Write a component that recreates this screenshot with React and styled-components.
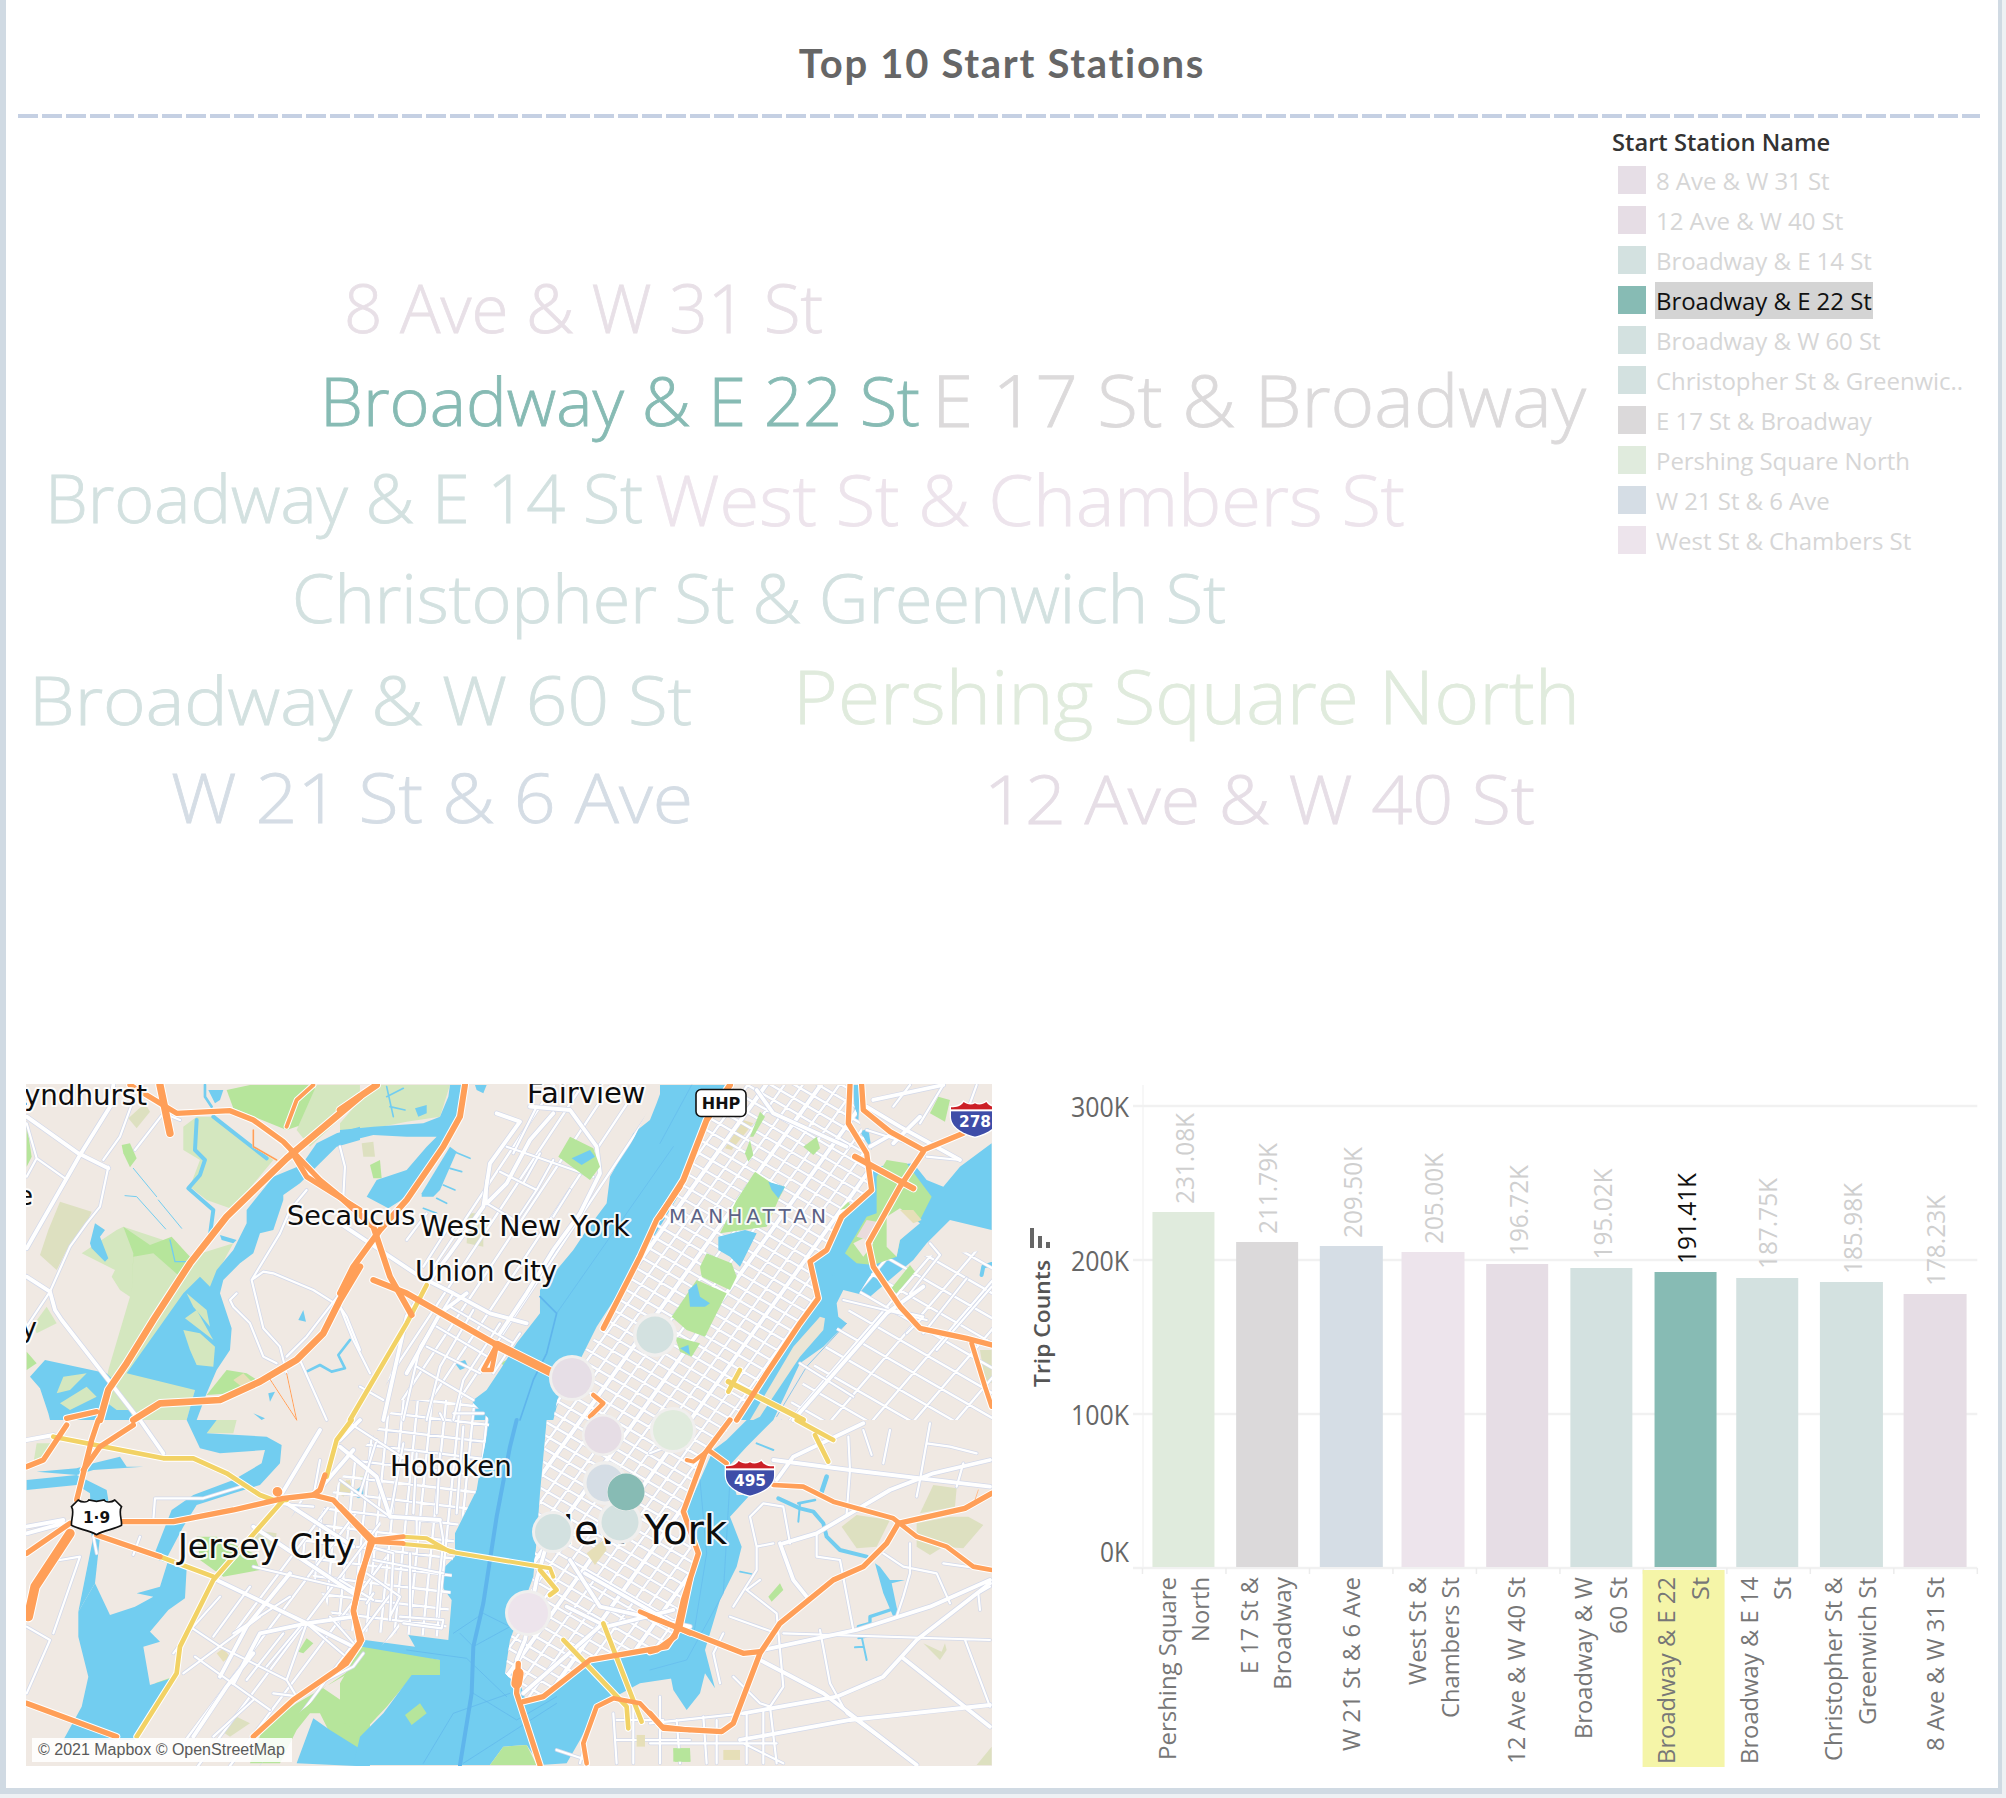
import React from "react";
import styled, { createGlobalStyle } from "styled-components";

const Global = createGlobalStyle`
  html, body { margin: 0; padding: 0; background: #eef1f4; }
  #root { width: 2006px; height: 1798px; }
`;

const SANS = `"Open Sans", "Noto Sans", sans-serif`;

const Frame = styled.div`
  box-sizing: border-box;
  width: 2002px;
  height: 1794px;
  display: flex;
  flex-direction: column;
  background: #fff;
  border-left: 6px solid #d0dae3;
  border-right: 4px solid #d0dae3;
  border-bottom: 6px solid #d0dae3;
  padding: 0 18px 0 12px;
  font-family: ${SANS};
`;
const Title = styled.h1`
  margin: 0;
  height: 114px;
  box-sizing: border-box;
  padding: 39px 0 0 6px;
  text-align: center;
  font: 700 40px/48px Lato, ${SANS};
  letter-spacing: 1.7px;
  color: #666;
`;
const DashRule = styled.div`
  height: 4px;
  flex: none;
  background: repeating-linear-gradient(90deg, #c5d0e3 0 20px, transparent 20px 24px);
`;
const TopRow = styled.section`
  flex: none;
  height: 966px;
  display: flex;
`;
const Cloud = styled.svg`
  flex: none;
  display: block;
  width: 1595px;
  height: 966px;
`;
const CloudWord = styled.text`
  font-family: ${SANS};
  font-weight: 300;
  font-size: ${p => p.$size}px;
  fill: ${p => p.$color};
  stroke: ${p => p.$color};
  stroke-width: 0.8px;
`;
const Legend = styled.aside`
  flex: 1;
  padding-top: 9px;
  display: flex;
  flex-direction: column;
`;
const LegendTitle = styled.div`
  height: 30px;
  font: 600 23.7px/30px ${SANS};
  color: #333;
  margin-bottom: 9px;
  margin-left: -1px;
`;
const LegendRow = styled.div`
  height: 40px;
  display: flex;
  align-items: flex-start;
  padding-left: 5px;
  gap: 10px;
`;
const Swatch = styled.span`
  flex: none;
  width: 28px;
  height: 28px;
  background: ${p => p.$color};
`;
const LegendLabel = styled.span`
  display: block;
  box-sizing: border-box;
  height: 37px;
  margin-top: -4px;
  margin-left: -1px;
  padding: 0 1px;
  white-space: nowrap;
  font: 400 24px/37px ${SANS};
  letter-spacing: -0.05px;
  color: ${p => (p.$active ? "#111" : "#d6d6d6")};
  background: ${p => (p.$active ? "#d4d4d4" : "transparent")};
`;
const BottomRow = styled.section`
  flex: none;
  display: flex;
  gap: 18px;
  padding-left: 8px;
`;
const MapBox = styled.div`
  position: relative;
  flex: none;
  width: 966px;
  height: 682px;
  overflow: hidden;
`;
const MapSvg = styled.svg`
  display: block;
  width: 966px;
  height: 682px;
`;
const Attribution = styled.div`
  position: absolute;
  left: 6px;
  bottom: 4px;
  width: 260px;
  height: 24px;
  box-sizing: border-box;
  background: rgba(255,255,255,.88);
  padding-left: 6px;
  font: 400 16px/24px "Liberation Sans", Arial, sans-serif;
  color: #5a5a5a;
  white-space: nowrap;
`;
const ChartSvg = styled.svg`
  display: block;
  flex: none;
  width: 980px;
  height: 686px;
`;
const Area = styled.path`
  fill: ${p => p.$fill};
`;
const Line = styled.path`
  fill: none;
  stroke: ${p => p.$color};
  stroke-width: ${p => p.$w};
  stroke-linecap: round;
  stroke-linejoin: round;
`;
const MapLabel = styled.text`
  font-family: "DejaVu Sans", sans-serif;
  font-size: ${p => p.$size}px;
  fill: #0d0d0d;
  stroke: rgba(255,255,255,.9);
  stroke-width: 4px;
  paint-order: stroke;
  stroke-linejoin: round;
`;
const ShieldText = styled.text`
  font-family: "DejaVu Sans", sans-serif;
  font-weight: 700;
  font-size: ${p => p.$size}px;
  fill: ${p => p.$color};
  text-anchor: middle;
`;
const AxisText = styled.text`
  font-family: ${SANS};
  font-size: 27px;
  fill: #666;
  text-anchor: end;
`;
const ValueText = styled.text`
  font-family: ${SANS};
  font-size: 25px;
  fill: ${p => (p.$active ? "#111" : "#cfcfcf")};
`;
const CategoryText = styled.text`
  font-family: ${SANS};
  font-size: 23px;
  fill: #777;
  text-anchor: end;
`;
const AxisTitle = styled.text`
  font-family: ${SANS};
  font-weight: 600;
  font-size: 21px;
  fill: #555;
  text-anchor: end;
`;

const WORDS = [
  ["8 Ave & W 31 St", 344, 823, 333, 67, "#e8e0e7"],
  ["Broadway & E 22 St", 320, 920, 426, 66, "#87bbb4"],
  ["E 17 St & Broadway", 932, 1586, 427, 71, "#dcdadb"],
  ["Broadway & E 14 St", 45, 643, 523, 66, "#d3e1e0"],
  ["West St & Chambers St", 655, 1405, 526, 70, "#ede4ec"],
  ["Christopher St & Greenwich St", 292, 1226, 623, 67, "#d3e1e0"],
  ["Broadway & W 60 St", 29, 692, 725, 67, "#d3e1e0"],
  ["Pershing Square North", 793, 1580, 724, 73, "#e0ebdd"],
  ["W 21 St & 6 Ave", 171, 693, 823, 68, "#d5dde5"],
  ["12 Ave & W 40 St", 984, 1535, 824, 67, "#e6dee6"],
];

const LEGEND = [
  ["8 Ave & W 31 St", "#e6dee6"],
  ["12 Ave & W 40 St", "#e6dde5"],
  ["Broadway & E 14 St", "#d3e1e0"],
  ["Broadway & E 22 St", "#87bbb4", true],
  ["Broadway & W 60 St", "#d3e1e0"],
  ["Christopher St & Greenwic..", "#d3e1e0"],
  ["E 17 St & Broadway", "#dbd9da"],
  ["Pershing Square North", "#e0ebdd"],
  ["W 21 St & 6 Ave", "#d5dde5"],
  ["West St & Chambers St", "#ede4ec"],
];

const fx = x => 1010 + (x - 1010) * 0.9962;

const BARS = [
  { v: "231.08K", x: 1153, w: 62, top: 1212, c: "#e0ebdd", vx: 1195, vy: 1204, lines: [["Pershing Square", 1177, 183], ["North", 1210, 65]] },
  { v: "211.79K", x: 1237, w: 62, top: 1242, c: "#dbd9da", vx: 1278.5, vy: 1234, lines: [["E 17 St &", 1259, 97], ["Broadway", 1292, 113]] },
  { v: "209.50K", x: 1321, w: 63, top: 1246, c: "#d5dde5", vx: 1363, vy: 1238, lines: [["W 21 St & 6 Ave", 1361, 174]] },
  { v: "205.00K", x: 1403, w: 63, top: 1252, c: "#ede4ec", vx: 1445, vy: 1244, lines: [["West St &", 1428, 108], ["Chambers St", 1461, 141]] },
  { v: "196.72K", x: 1488, w: 62, top: 1264, c: "#e6dde5", vx: 1530, vy: 1256, lines: [["12 Ave & W 40 St", 1527, 187]] },
  { v: "195.02K", x: 1572.5, w: 62, top: 1268, c: "#d3e1e0", vx: 1614, vy: 1259.5, lines: [["Broadway & W", 1594, 162], ["60 St", 1629, 57]] },
  { v: "191.41K", x: 1657, w: 62, top: 1272, c: "#87bbb4", vx: 1699, vy: 1264, active: true, lines: [["Broadway & E 22", 1678, 187], ["St", 1711.5, 23]] },
  { v: "187.75K", x: 1739, w: 62, top: 1278, c: "#d3e1e0", vx: 1780, vy: 1269, lines: [["Broadway & E 14", 1761, 187], ["St", 1794, 23]] },
  { v: "185.98K", x: 1823, w: 63, top: 1282, c: "#d3e1e0", vx: 1865, vy: 1274, lines: [["Christopher St &", 1845, 184], ["Greenwich St", 1879, 148]] },
  { v: "178.23K", x: 1907, w: 63, top: 1294, c: "#e6dde5", vx: 1949, vy: 1286, lines: [["8 Ave & W 31 St", 1947.5, 174]] },
];

const C = {
  water: "#72cdf0", land: "#f0e9e3", pale: "#d4e7bf", bright: "#b6e59b", olive: "#dde0c0", tan: "#e6dfb8",
  orange: "#ff9f58", yellow: "#f2d265", ship: "#5fb5ec", pink: "#eadbdc",
};

/* traced per crop of the reference; coordinates at 3 units per pixel */
const TILES = [
  { o: [20, 1080],
    under: [
      [C.pale, "M490 140 L530 110 L580 110 L760 240 L660 360 L630 385 L560 360 L510 320 L540 240 L490 210 Z"],
      [C.pale, "M185 520 L290 450 L310 440 L430 480 L510 530 L640 490 L580 600 L560 700 L590 780 L580 860 L525 930 L500 1020 L240 1020 L265 870 L330 650 L300 630 L275 590 L285 570 Z"],
      [C.bright, "M310 440 L390 495 L455 470 L510 530 L480 590 L400 520 L340 530 L335 650 L340 520 Z"],
      [C.bright, "M620 30 L690 15 L880 15 L900 60 L860 130 L800 150 L640 85 Z"],
      [C.pale, "M890 15 L1020 15 L1020 60 L870 200 L830 150 Z"],
      [C.bright, "M305 195 L330 190 L350 235 L330 262 L310 220 Z"],
      [C.olive, "M120 365 L215 395 L200 430 L140 510 L110 570 L60 525 L85 450 Z"],
      [C.olive, "M325 115 L375 70 L390 95 L350 145 Z"],
      [C.bright, "M20 130 L35 230 L20 260 Z"],
      [C.bright, "M20 815 L50 850 L20 870 Z"],
      [C.pale, "M40 735 L80 680 L110 730 L50 760 Z"],
      [C.bright, "M560 945 L620 870 L680 880 L720 905 L700 920 L640 940 Z"],
      [C.tan, "M640 900 L670 880 L695 905 L670 925 Z"],
    ],
    water: [
      "M1020 140 L950 160 L890 190 L845 255 L760 290 L680 390 L680 430 L640 510 L590 570 L570 620 L540 590 L490 640 L320 880 L525 930 L500 1020 L530 1020 L560 940 L590 870 L630 810 L635 745 L600 640 L610 600 L660 550 L700 520 L720 460 L760 450 L790 360 L790 345 L840 310 L900 250 L950 200 L1020 180 Z",
      "M565 30 L610 30 L600 60 L585 70 Z",
      "M225 430 L255 450 L240 470 L265 535 L255 545 L215 505 L210 490 Z",
      "M600 465 L650 480 L640 490 L605 480 Z",
      "M850 690 L858 725 L835 720 Z",
      "M75 840 L260 880 L280 900 L250 960 L290 990 L330 990 L340 1020 L90 1020 L85 1000 L60 925 L30 890 Z",
      "M745 940 L765 935 L750 965 Z",
      "M700 1000 L735 1015 L725 1020 Z",
    ],
    canals: [
      [12, "M580 110 L740 235"],
      [12, "M530 120 L525 210 L555 240 L540 285 L505 325 L580 390 L570 465"],
      [8, "M555 15 L555 50 L575 80"],
      [3, "M340 265 L410 350 M415 360 L485 445 M315 347 L350 350 L437 447"],
      [4, "M450 480 L465 545 L510 545"],
      [8, "M860 875 L900 855 L935 875 L975 865 L955 825 L990 780"],
    ],
    islands: [
      "M490 750 L540 760 L585 800 L580 860 L530 855 L510 810 Z",
      "M495 715 L530 690 L580 780 Z",
      "M500 640 L560 690 L570 740 L520 680 Z",
      "M130 890 L200 880 L150 930 L110 940 Z",
      "M120 970 L200 920 L230 950 L150 990 Z",
    ],
    major: "M20 505 L180 225 L270 80 L280 15 M20 590 L90 635 L105 690 L125 720 L350 1010 M20 110 L175 220 L265 265",
    minor: "M20 130 L50 235 L20 290 M50 235 L135 295 M265 260 L240 380 L200 430 L150 500 L90 635 L20 740 M345 210 L430 100 M250 240 L300 170 L340 60 M480 120 L430 100 M650 640 L630 660 L640 680 L690 730 L730 830 L770 850 M695 600 L730 745 L780 800 L800 880 M695 600 L730 575 L760 580 L880 630 L960 680 L980 710 L1020 810 M695 600 L780 460 L810 390 L860 330 M800 830 L860 770 L960 640 L1020 520 M840 840 L920 1020 M960 200 L975 260 L970 350",
    orange: [
      [18, "M240 1020 L265 930 L320 850 L400 720 L510 550 L620 410 L800 235 L1020 50"],
      [18, "M340 1020 L420 970 L600 960 L720 905 L830 840 L910 760 L960 660 L1020 560"],
      [20, "M420 15 L450 160"],
      [14, "M330 15 L470 100 L630 92 L700 120 L790 185 L900 300 L1010 390"],
      [10, "M800 140 L830 60 L880 15"],
      [5, "M700 150 L700 200 L770 240"],
      [14, "M815 215 L860 290 L1020 390"],
      [3, "M745 890 L830 1020 M800 880 L830 1020"],
      [14, "M140 1015 L230 995"],
    ],
    yellow: [],
  },
  { o: [340, 1080],
    under: [
      [C.pale, "M0 130 L100 15 L330 15 L300 110 L200 125 L0 165 Z"],
      [C.olive, "M65 190 L100 185 L105 230 L70 230 Z"],
      [C.bright, "M90 255 L120 240 L125 295 L100 295 Z"],
      [C.olive, "M385 400 L430 400 L430 500 L380 490 Z"],
      [C.bright, "M480 850 L510 835 L500 860 Z"],
    ],
    water: [
      "M0 150 L100 140 L250 130 L300 110 L325 50 L330 15 L365 15 L360 100 L300 200 L200 350 L145 385 L80 350 L110 300 L200 270 L260 200 L290 170 L200 170 L100 165 L0 190 Z",
      "M245 340 L330 200 L350 215 L300 330 L280 350 L245 350 Z",
      "M225 85 L260 75 L260 100 L235 110 Z",
      "M405 15 L440 15 L430 40 L410 30 Z",
      "M1020 15 L970 15 L950 70 L930 120 L880 160 L860 200 L810 290 L800 370 L740 450 L700 510 L650 570 L600 630 L600 700 L530 790 L480 870 L440 930 L400 960 L395 1020 L640 1020 L650 980 L770 740 L900 540 L1020 340 Z",
      "M345 850 L375 840 L385 860 L360 870 Z",
    ],
    canals: [
      [5, "M140 20 L160 110 M140 50 L190 25 M150 80 L195 90 M330 210 L390 235 M330 265 L365 275 M310 315 L345 330 M290 355 L320 370 M250 385 L290 400"],
    ],
    ship: [
      [5, "M600 650 L650 700 L620 820 L580 900 L540 1020"],
      [1.5, "M650 700 L1000 200"],
    ],
    parksTop: [
      [C.bright, "M655 230 L690 170 L760 205 L780 260 L750 300 Z"],
      [C.water, "M695 235 L750 210 L765 230 L725 255 Z"],
    ],
    major: "M470 100 L540 125 L450 250 L430 380 L330 520 L270 600 L200 710 L130 1020 M570 80 L690 90 L770 200 L780 280 L720 400 L640 510 L560 640 L480 760 M640 100 L570 180 L500 310 L440 370 M0 430 L240 590 L340 640 L450 700 L560 730 M200 880 L300 700 L380 640",
    minor: "M500 200 L760 290 M480 275 L590 330 M590 80 L520 220 M600 220 L550 310 M640 240 L590 330 L530 420 M690 330 L640 410 M440 300 L440 370 L540 430 M330 680 L520 790 M290 740 L460 840 M260 800 L420 880 M230 860 L400 960 M340 640 L240 800 L190 1020 M400 690 L300 860 L260 1020 M480 730 L370 900 L340 1020 M540 760 L460 880 M60 920 L130 960 M0 680 L40 780 L90 880 M200 480 L260 400 M250 560 L320 450 M340 1000 L430 1000 M300 1000 L310 1020",
    orange: [
      [16, "M375 15 L360 110 L310 200 L200 360 L120 450 L40 560 L0 640"],
      [16, "M0 350 L100 440 L150 590 L215 705"],
      [16, "M100 600 L200 640 L470 795"],
      [24, "M470 795 L640 880"],
      [12, "M470 795 L430 870 L455 870 L470 795"],
      [12, "M760 945 L790 970 L750 1010"],
      [14, "M1020 320 L950 420 L900 530 L790 745"],
      [18, "M0 90 L110 15"],
    ],
    yellow: [[12, "M260 615 L200 730 L30 1020"]],
  },
  { o: [660, 1080],
    under: [
      [C.olive, "M960 810 L995 810 L995 910 L975 900 Z"],
      [C.bright, "M810 100 L835 50 L870 60 L855 125 Z"],
      [C.tan, "M195 205 L250 120 L280 130 L215 210 Z"],
    ],
    water: [
      "M0 15 L195 15 L140 110 L90 220 L60 310 L0 400 Z",
      "M230 1020 L320 880 L420 730 L470 660 L445 550 L490 510 L545 400 L630 340 L640 260 L760 250 L800 300 L850 320 L900 260 L995 190 L995 450 L870 420 L800 490 L760 540 L700 590 L630 650 L550 630 L530 670 L535 710 L560 730 L490 800 L420 850 L340 1020 Z",
      "M580 15 L600 15 L595 130 L585 120 Z",
      "M600 155 L625 145 L635 210 Z",
    ],
    canals: [[12, "M965 585 L970 560 L995 552"]],
    ship: [[1.5, "M0 190 L95 15"], [2, "M350 1010 L440 860 L560 730"]],
    islandsLand: ["M480 710 L495 715 L490 750 L420 830 L300 1010 L280 1020 L270 1020 L400 800 Z"],
    islands: [],
    major: "M620 80 L720 140 L900 240 M640 60 L850 15 M780 110 L700 190 M400 1020 L680 700 L790 620 M630 200 L700 160 M290 30 L340 100 L560 200",
    minor: "M550 660 L800 720 M810 490 L840 525 L750 640 M620 150 L780 200 M800 230 L900 240 M700 80 L750 15 M850 15 L780 130 M950 15 L930 70 M420 850 L580 950 M700 690 L790 710 L740 760 M920 595 L790 760 M995 620 L830 810",
    parksTop: [
      [C.bright, "M285 275 L335 310 L375 320 L355 360 L320 440 L285 445 L180 460 L230 360 Z"],
      [C.water, "M175 470 L255 450 L290 460 L240 560 L210 530 L175 510 Z"],
      [C.water, "M325 305 L375 320 L355 355 L335 330 Z"],
      [C.bright, "M140 520 L215 550 L230 590 L210 630 L125 590 L120 560 Z"],
      [C.bright, "M110 600 L200 640 L135 770 L80 750 L35 710 Z"],
      [C.water, "M85 630 L110 610 L120 650 L150 670 L135 680 L90 680 Z"],
      [C.bright, "M45 770 L120 790 L95 830 L60 815 Z"],
      [C.water, "M60 805 L85 795 L90 825 Z"],
      [C.bright, "M430 200 L470 170 L480 205 L460 225 Z"],
      [C.bright, "M300 95 L315 110 L280 170 L270 170 Z"],
      [C.bright, "M255 220 L270 180 L280 225 L265 245 Z"],
      [C.bright, "M540 390 L565 365 L575 380 Z"],
      [C.bright, "M555 520 L620 410 L650 400 L650 290 L680 240 L740 250 L770 290 L815 350 L780 420 L720 480 L710 530 L640 555 L590 550 Z"],
      [C.pink, "M590 470 L620 420 L650 425 L625 480 Z"],
      [C.land, "M580 490 L610 475 L640 490 L610 530 Z"],
      [C.land, "M680 410 L720 385 L780 430 L720 480 L710 530 L680 500 Z"],
      [C.tan, "M720 390 L760 390 L785 420 L760 430 Z"],
      [C.bright, "M690 630 L750 555 L765 575 L710 640 Z"],
      [C.water, "M515 585 L520 575 L527 588 Z"],
    ],
    orange: [
      [16, "M210 15 L140 120 L70 300 L0 410"],
      [14, "M570 15 L565 130 L620 220 L635 330 L545 410 L500 510 L450 545 L475 655 L420 730 L320 880 L230 1020"],
      [14, "M605 15 L610 90 L690 155 L790 210 L910 160"],
      [16, "M585 230 L760 325"],
      [14, "M790 215 L720 320 L625 490 L640 560 L720 680 L780 745 L920 775 L995 795"],
      [12, "M935 790 L975 920 L995 980"],
    ],
    yellow: [[14, "M205 905 L430 1020"], [12, "M240 870 L205 935"]],
  },
  { o: [20, 1420],
    under: [
      [C.bright, "M590 350 L700 400 L720 450 L610 470 L540 420 L530 350 Z"],
      [C.olive, "M700 330 L770 340 L760 400 L690 360 Z"],
      [C.bright, "M1050 680 L1020 730 L910 805 L1050 900 L1050 1000 L960 1000 L900 880 L870 880 L830 930 L780 1030 L690 1030 L730 920 L830 850 L1020 740 Z"],
      [C.tan, "M590 700 L610 685 L630 710 L610 725 Z"],
      [C.olive, "M600 930 L650 890 L690 910 L630 950 Z"],
      [C.tan, "M950 215 L980 180 L1000 195 L970 230 Z"],
      [C.bright, "M835 695 L860 655 L880 670 L850 700 Z"],
      [C.bright, "M405 790 L460 770 L430 810 Z"],
      [C.pale, "M545 0 L650 0 L640 40 L560 40 Z"],
      [C.pale, "M50 70 L110 70 L60 130 L40 130 Z"],
    ],
    water: [
      "M500 0 L590 0 L560 40 L740 50 L785 75 L780 130 L720 195 L640 220 L530 255 L490 320 L440 415 L400 410 L455 270 L520 225 L640 180 L725 130 L735 90 L600 100 L540 85 Z",
      "M415 420 L500 445 L495 535 L445 570 L390 635 L420 665 L370 680 L390 795 L470 770 L345 960 L130 960 L185 860 L205 770 L175 650 L175 575 L225 490 L270 585 L345 560 L400 530 L350 520 L420 500 L445 420 Z",
      "M225 490 L240 350 L220 350 L175 575 Z",
      "M20 180 L170 165 L260 210 L265 240 L240 350 L215 350 L210 220 L170 195 L20 210 Z",
      "M50 155 L170 145 L220 130 L300 110 L320 140 L370 140 L220 150 L170 165 Z",
      "M830 1030 L880 895 L930 930 L1050 1005 L1050 1040 Z",
      "M1000 225 L1030 190 L1030 225 L1015 235 Z",
    ],
    major: "M20 60 L100 45 M20 320 L130 300 M20 340 L130 310 M430 100 L360 0 M590 480 L860 610 L1000 680 M700 320 L1000 520 M800 250 L1000 380 M860 610 L1000 590 M900 30 L780 230 M1000 90 L880 230 M640 790 L720 640 L860 610 M600 770 L680 620 L810 460 M520 950 L620 800 L700 700",
    minor: "M20 620 L90 660 L20 820 M220 350 L230 400 M120 420 L180 410 L100 640 M400 300 L405 235 L550 235 L680 195 M340 405 L360 350 M510 620 L600 680 L800 780 L830 830 M525 710 L750 870 M460 700 L520 620 M490 760 L720 590 M800 780 L860 610 M640 640 L810 530 M580 650 L690 500 M520 620 L600 530 M740 740 L840 620 M680 780 L790 640 M860 610 L990 720 M930 590 L1010 680 M1030 700 L1000 740 L900 790 M580 950 L700 840 M760 820 L840 830 M700 440 L1000 510 M760 250 L880 260 M900 120 L880 230",
    orange: [
      [14, "M20 140 L70 120 L130 30 L140 15"],
      [14, "M170 240 L215 60 L235 0"],
      [14, "M190 150 L240 80 L340 15"],
      [14, "M20 400 L150 310"],
      [26, "M25 590 L45 500 L150 340"],
      [14, "M300 305 L460 305 L640 270 L790 235 L880 225 L940 240 L1050 360"],
      [14, "M230 345 L420 410"],
      [14, "M1050 370 L1000 570 L1020 670 L980 730 L820 840 L700 950"],
      [14, "M20 850 L290 950"],
      [14, "M915 165 L900 210 L880 225"],
      [26, "M772 215 L773 216"],
    ],
    yellow: [
      [12, "M100 50 L430 115 L520 115 L620 160 L720 225 L760 240 L800 240"],
      [12, "M420 410 L580 470"],
      [12, "M790 240 L580 480 L480 680 L470 760 L350 950"],
      [12, "M995 0 L950 60 L920 170"],
    ],
  },
  { o: [340, 1420],
    under: [
      [C.bright, "M75 670 L300 720 L300 765 L215 770 L140 860 L60 945 L0 900 L0 790 L40 720 Z"],
      [C.tan, "M-5 190 L30 180 L35 220 L0 225 Z"],
      [C.bright, "M60 170 L85 170 L70 195 Z"],
      [C.water, "M40 215 L70 195 L60 235 Z"],
    ],
    water: [
      "M445 0 L410 210 L345 340 L345 410 L305 450 L310 505 L335 540 L325 660 L205 645 L225 680 L75 660 L65 680 L300 720 L300 765 L215 765 L130 880 L60 950 L40 1035 L450 1035 L490 980 L560 975 L600 1035 L680 1030 L720 960 L770 860 L900 790 L1000 775 L1050 720 L1050 640 L1020 640 L985 690 L750 725 L610 830 L555 835 L530 760 L495 760 L510 660 L580 470 L590 360 L600 220 L620 0 Z",
    ],
    ship: [
      [12, "M530 0 L510 80 L470 290 L430 550 L400 680 L395 820 L360 1035"],
      [2, "M400 820 L530 900 L650 830 M340 640 L430 580 L510 620 M200 690 L380 715 L500 830 M360 640 L400 680 L510 620 M250 1030 L340 880 L510 820 M370 1030 L650 850"],
    ],
    parksTop: [
      [C.bright, "M450 1035 L490 980 L560 975 L590 1035 Z"],
      [C.bright, "M195 885 L240 850 L260 880 L215 915 Z"],
      [C.bright, "M1000 985 L1050 985 L1050 1025 L1000 1025 Z"],
      [C.tan, "M740 400 L790 360 L800 390 L765 435 Z"],
      [C.tan, "M890 945 L915 945 L915 980 L890 980 Z"],
    ],
    major: "M0 80 L110 170 L150 290 M60 0 L0 60 M150 290 L300 300 M640 300 L590 480 L555 660 L530 720 M735 460 L1050 640 M690 420 L780 560 L1050 620 M680 560 L800 620 L1000 570 M790 610 L550 820",
    minor: "M30 10 L200 120 M110 60 L60 220 M190 70 L150 290 M230 100 L220 280 M300 100 L290 280 M370 20 L350 280 M0 180 L150 290 M80 460 L180 530 L150 590 M100 520 L80 550 M100 420 L310 460 M90 380 L160 400 L150 600 M210 400 L210 590 M0 480 L100 540 M180 590 L310 600 L305 625 L190 610 M230 300 L230 350 M300 300 L310 360 L300 460 L290 590 M820 880 L830 1030 M880 860 L880 1030 M960 830 L960 1030 M830 900 L970 900 M830 960 L1050 960 M650 990 L740 1020 M720 1030 L760 880",
    orange: [
      [14, "M0 260 L100 360 L60 470 L40 575 L65 660 L0 740"],
      [12, "M100 360 L190 350 M100 365 L190 370"],
      [14, "M535 730 L530 820 L600 1035"],
      [30, "M535 760 L530 790"],
      [14, "M550 845 L610 830 L750 720 L980 680 L1020 620 L1050 480"],
      [12, "M900 575 L1050 640"],
      [12, "M740 1030 L730 970 L770 860 L820 835 L900 850 L965 920 L1050 930"],
    ],
    yellow: [
      [10, "M190 350 L260 355 L330 395 L630 445 L640 470"],
      [10, "M190 372 L280 380 L340 395"],
      [12, "M600 450 L650 510 L630 525"],
      [12, "M670 660 L860 860 L865 925"],
      [12, "M790 610 L905 905"],
    ],
  },
  { o: [650, 1420],
    under: [
      [C.olive, "M850 195 L920 205 L915 260 L810 280 Z"],
      [C.olive, "M575 320 L620 285 L720 300 L680 380 L620 385 Z"],
      [C.olive, "M800 310 L900 290 L955 290 L1000 315 L940 385 L880 380 L840 405 L800 380 Z"],
      [C.bright, "M355 530 L390 490 L400 510 L365 545 Z"],
      [C.olive, "M820 670 L875 695 L885 670 L890 690 L870 720 Z"],
      [C.bright, "M70 985 L120 985 L122 1025 L75 1025 Z"],
      [C.tan, "M220 990 L270 990 L270 1020 L220 1020 Z"],
      [C.olive, "M980 1035 L1025 980 L1025 1035 Z"],
    ],
    water: [
      "M0 700 L0 770 L60 760 L70 810 L110 870 L150 820 L165 760 L195 805 L165 690 L210 540 L260 440 L275 380 L240 290 L300 225 L370 225 L260 225 L235 140 L290 80 L370 0 L290 0 L230 60 L190 90 L150 180 L110 270 L145 400 L100 560 L70 660 L20 695 Z",
      "M675 430 L690 440 L720 480 L765 480 L725 490 L745 585 L730 590 L700 520 Z",
    ],
    canals: [
      [6, "M320 70 L370 90"],
      [12, "M385 235 L450 265 L490 275 L520 310 L530 350 L570 390 L650 410"],
      [14, "M530 170 L515 215"],
      [8, "M445 250 L495 240"],
      [6, "M450 250 L445 305"],
      [10, "M625 620 L660 610 L660 590 L720 570"],
      [6, "M625 655 L650 650 M635 650 L650 720 M615 682 L640 680"],
      [5, "M270 455 L305 462"],
    ],
    ship: [[1.5, "M150 180 L170 400 L130 650 M240 180 L220 520 L110 720 L0 750"]],
    major: "M370 120 L600 150 L1020 200 M380 180 L430 110 L640 10 M390 370 L430 480 L470 530 M400 370 L500 340 L720 210 L850 160 L1020 120 M1020 480 L840 560 L620 630 L340 690 M330 720 L520 820 L800 1035 M1020 490 L800 660 L700 770 L560 830 L280 880 M270 960 L600 900 L1020 855 M760 715 L1020 920",
    minor: "M370 370 L320 380 L300 290 L340 250 L400 260 L420 370 M320 380 L320 450 L250 560 M330 480 L290 510 L380 580 L400 800 L360 860 M240 590 L380 640 M220 640 L190 700 L210 790 M250 770 L330 850 L360 860 L380 1030 M510 630 L540 790 L590 880 L800 1035 M500 340 L500 410 L570 420 L610 630 M595 50 L600 150 L590 280 M720 30 L700 130 M640 30 L665 105 M840 10 L810 180 L800 230 M830 70 L900 80 L980 100 M940 130 L920 200 M780 370 L780 460 L760 530 L740 590 M700 400 L760 440 L860 460 L900 550 M880 430 L1020 450 M1020 500 L985 520 L990 570 M945 660 L1020 860 M0 910 L280 880 M0 970 L380 970 M290 880 L290 1030 M340 870 L340 1030 M200 900 L200 1030 M160 890 L170 1030 M80 900 L90 1030 M400 1030 L280 970 M400 640 L1020 660 M0 100 L100 60",
    orange: [
      [14, "M240 0 L165 100 L100 275 L145 400 L100 540 L75 650 L20 690 L0 695"],
      [12, "M175 90 L230 130"],
      [10, "M110 120 L130 125 L175 90"],
      [14, "M0 590 L280 700 L330 695"],
      [12, "M370 195 L460 200 L550 245 L730 295 L800 350 L890 380 L970 440 L1025 450"],
      [14, "M1025 220 L945 265 L745 310 L710 370 L640 440 L550 480 L390 610 L330 700 L250 910 L215 935 L40 925 L0 880"],
      [2, "M975 240 L985 210"],
    ],
    yellow: [[12, "M440 0 L550 60"], [12, "M495 45 L535 125"]],
  },
];

function gridLines(px, py, ax, ay, sx, sy, along, across, count) {
  let d = "";
  for (let i = -count; i <= count; i++) {
    const bx = px + sx * across * i;
    const by = py + sy * across * i;
    d += `M${bx - ax * along} ${by - ay * along}L${bx + ax * along} ${by + ay * along}`;
  }
  return d;
}
const MAN = "727,1085 703,1123 683,1180 660,1217 607,1323 583,1353 560,1387 553,1420 547,1420 540,1500 532,1587 510,1640 505,1673 527,1697 547,1697 587,1660 667,1647 683,1623 673,1640 683,1593 693,1563 687,1510 703,1463 730,1427 737,1420 767,1373 800,1323 817,1300 808,1263 823,1250 842,1213 870,1193 873,1170 860,1123 847,1085";
const ZONES = [
  { id: "man", pts: MAN,
    majors: gridLines(650, 1400, .58, -.81, .86, .5, 700, 45, 10),
    minors: gridLines(650, 1400, .58, -.81, .86, .5, 700, 15, 30) + gridLines(650, 1400, .86, .5, .58, -.81, 700, 12, 36) },
  { id: "hob", pts: "400,1400 470,1400 490,1420 475,1495 455,1530 450,1600 445,1637 340,1630 300,1550 340,1480",
    majors: "",
    minors: gridLines(420, 1520, .1, -1, 1, .12, 300, 14, 14) + gridLines(420, 1520, 1, .12, .1, -1, 300, 17, 10) },
  { id: "wny", pts: "530,1085 660,1085 600,1207 537,1310 475,1400 380,1400 440,1250",
    majors: "", minors: gridLines(530, 1250, .55, -.83, .85, .5, 300, 24, 8) },
  { id: "jc", pts: "180,1740 240,1620 300,1500 380,1520 400,1630 290,1720 260,1766 190,1766",
    majors: "", minors: gridLines(300, 1630, .6, -.8, .85, .5, 300, 26, 8) },
  { id: "qns", pts: "880,1260 992,1250 992,1420 780,1420 830,1340",
    majors: "", minors: gridLines(900, 1340, .65, -.76, .87, .5, 300, 32, 7) + gridLines(900, 1340, .87, .5, .65, -.76, 300, 22, 10) },
];

const CIRCLES = [
  ["#d3e1e0", 655, 1335, 18.5, 22],
  ["#e6dee6", 572, 1378, 20, 23],
  ["#e6dde5", 603, 1435, 18.5, 21],
  ["#e0ebdd", 673, 1430, 20, 23],
  ["#d5dde5", 605, 1483, 18.5, 22],
  ["#d3e1e0", 620, 1522, 18.5, 22],
  ["#d3e1e0", 553, 1532, 18, 21],
  ["#ede4ec", 528, 1613, 20, 23],
  ["#87bbb4", 626, 1492, 18.5, 19],
];

const Marker = styled.circle`
  fill: ${p => p.$fill};
`;
const Ring = styled.circle`
  fill: #f0efee;
`;
const Gridline = styled.line`
  stroke: #f1f1f1;
  stroke-width: 2.5;
`;
const BarRect = styled.rect`
  fill: ${p => p.$fill};
`;

const INTERSTATE = "M0 22 C18 22 30 18 38 6 C48 14 62 16 72 10 C82 16 96 14 106 6 C114 18 126 22 144 22 L144 50 C144 80 110 100 72 110 C34 100 0 80 0 50 Z";
const US = "M20 0 C30 8 48 8 52 0 L75 4 L98 0 C102 8 120 8 130 0 L150 20 C140 34 152 60 150 76 C130 88 100 90 75 104 C50 90 20 88 0 76 C-2 60 10 34 0 20 Z";

function Shield3({ x, y, text, id }) {
  return (
    <g transform={`translate(${x} ${y}) scale(.3333)`}>
      <clipPath id={id}><path d={INTERSTATE} /></clipPath>
      <path d={INTERSTATE} fill="#fff" stroke="#fff" strokeWidth="8" />
      <g clipPath={`url(#${id})`}>
        <rect x="-2" y="-2" width="150" height="30" fill="#cc2027" />
        <rect x="-2" y="34" width="150" height="80" fill="#3e4da8" />
      </g>
      <ShieldText x="72" y="80" $size={46} $color="#fff">{text}</ShieldText>
    </g>
  );
}

function MapDrawing() {
  const tile = (t, children, k) => (
    <g key={k} transform={`translate(${t.o[0]} ${t.o[1]}) scale(.3333)`}>{children}</g>
  );
  return (
    <MapSvg viewBox="26 1084 966 682" xmlns="http://www.w3.org/2000/svg">
      <defs>
        {ZONES.map(z => (
          <clipPath id={`zone-${z.id}`} key={z.id}><polygon points={z.pts} /></clipPath>
        ))}
      </defs>
      <rect x="26" y="1084" width="966" height="682" fill={C.land} />
      {TILES.map((t, i) => tile(t, (t.under || []).map((a, j) => <Area key={j} $fill={a[0]} d={a[1]} />), `u${i}`))}
      {TILES.map((t, i) => tile(t, (t.water || []).map((d, j) => <Area key={j} $fill={C.water} d={d} />), `w${i}`))}
      {TILES.map((t, i) => tile(t, (t.canals || []).map((a, j) => <Line key={j} $color={C.water} $w={a[0]} d={a[1]} />), `c${i}`))}
      {TILES.map((t, i) => tile(t, (t.ship || []).map((a, j) => <Line key={j} $color={C.ship} $w={a[0]} d={a[1]} />), `s${i}`))}
      {TILES.map((t, i) => tile(t, (t.islands || []).map((d, j) => <Area key={j} $fill={C.pale} d={d} />), `i${i}`))}
      {TILES.map((t, i) => tile(t, (t.islandsLand || []).map((d, j) => <Area key={j} $fill="#ebe5d6" d={d} />), `l${i}`))}
      {ZONES.map(z => (
        <g key={z.id} clipPath={`url(#zone-${z.id})`}>
          <Line $color="#d3d9ea" $w={3.6} d={z.minors} />
          {z.majors && <Line $color="#d3d9ea" $w={5.6} d={z.majors} />}
          <Line $color="#fff" $w={2.3} d={z.minors} />
          {z.majors && <Line $color="#fff" $w={4} d={z.majors} />}
        </g>
      ))}
      {TILES.map((t, i) => tile(t, [
        <Line key="a" $color="#d3d9ea" $w={11} d={t.minor} />,
        <Line key="b" $color="#d3d9ea" $w={16} d={t.major} />,
      ], `cas${i}`))}
      {TILES.map((t, i) => tile(t, [
        <Line key="a" $color="#fff" $w={6.5} d={t.minor} />,
        <Line key="b" $color="#fff" $w={11.5} d={t.major} />,
      ], `st${i}`))}
      {TILES.map((t, i) => tile(t, (t.parksTop || []).map((a, j) => <Area key={j} $fill={a[0]} d={a[1]} />), `p${i}`))}
      {TILES.map((t, i) => tile(t, (t.yellow || []).map((a, j) => <Line key={j} $color="#fff" $w={a[0] + 8} d={a[1]} />), `yc${i}`))}
      {TILES.map((t, i) => tile(t, t.orange.map((a, j) => <Line key={j} $color="#fff" $w={a[0] + (a[0] > 5 ? 8 : 0)} d={a[1]} />), `oc${i}`))}
      {TILES.map((t, i) => tile(t, (t.yellow || []).map((a, j) => <Line key={j} $color={C.yellow} $w={a[0] + 2} d={a[1]} />), `y${i}`))}
      {TILES.map((t, i) => tile(t, t.orange.map((a, j) => <Line key={j} $color={C.orange} $w={a[0] + (a[0] > 5 ? 2 : 0)} d={a[1]} />), `o${i}`))}

      <MapLabel x="11" y="1105" $size={27.7}>Lyndhurst</MapLabel>
      <MapLabel x="33" y="1205" $size={27} textAnchor="end">e</MapLabel>
      <MapLabel x="37" y="1337" $size={27} textAnchor="end">y</MapLabel>
      <MapLabel x="527" y="1103" $size={29}>Fairview</MapLabel>
      <MapLabel x="287" y="1225" $size={27}>Secaucus</MapLabel>
      <MapLabel x="420" y="1236" $size={28.5}>West New York</MapLabel>
      <MapLabel x="415" y="1281" $size={27.5}>Union City</MapLabel>
      <MapLabel x="390" y="1476" $size={27.7}>Hoboken</MapLabel>
      <MapLabel x="178" y="1558" $size={33.2}>Jersey City</MapLabel>
      <MapLabel x="544" y="1544" $size={40}>New York</MapLabel>
      <MapLabel x="669" y="1223" $size={20} textLength="157" style={{ fill: "#5b6286" }}>MANHATTAN</MapLabel>

      {CIRCLES.map(([f, x, y, r, R], i) => (
        <g key={i}>
          <Ring cx={x} cy={y} r={R} />
          <Marker cx={x} cy={y} r={r} $fill={f} />
        </g>
      ))}

      {/* route shields */}
      <g transform="translate(696 1089.5)">
        <rect x="0" y="0" width="50" height="27" rx="5" fill="#fff" stroke="#111" strokeWidth="1.6" />
        <ShieldText x="25" y="19.5" $size={16} $color="#111">HHP</ShieldText>
      </g>
      <g transform="translate(71.5 1500) scale(.3333)">
        <path d={US} fill="#fff" stroke="#111" strokeWidth="5" />
        <ShieldText x="75" y="68" $size={46} $color="#111">1·9</ShieldText>
      </g>
      <Shield3 id="s278" x={951} y={1100} text="278" />
      <Shield3 id="s495" x={726} y={1459} text="495" />
    </MapSvg>
  );
}

function Chart() {
  const ticks = [["300K", 1106, 58], ["200K", 1260, 58], ["100K", 1414, 58], ["0K", 1567, 29]];
  return (
    <ChartSvg viewBox="1010 1084 980 686" xmlns="http://www.w3.org/2000/svg">
      <line x1="1143" y1="1085" x2="1143" y2="1568" stroke="#f4f4f4" strokeWidth="1.5" />
      {ticks.map(([t, y, w]) => (
        <g key={t}>
          <Gridline x1="1133" x2={fx(1981)} y1={y === 1567 ? 1568 : y} y2={y === 1567 ? 1568 : y} />
          <AxisText x="1129" y={y + (y === 1567 ? -5 : 11)} textLength={w} lengthAdjust="spacingAndGlyphs">{t}</AxisText>
        </g>
      ))}
      {Array.from({ length: 11 }).map((_, i) => (
        <line key={i} x1={fx(1143 + 83.8 * i)} x2={fx(1143 + 83.8 * i)} y1="1568" y2="1574" stroke="#ececec" strokeWidth="1.5" />
      ))}
      <rect x={fx(1645)} y="1570" width="82" height="197" fill="#f5f5a8" />
      {BARS.map(b => (
        <g key={b.v}>
          <BarRect x={fx(b.x)} y={b.top} width={b.w} height={1567 - b.top} $fill={b.c} />
          <ValueText $active={b.active} transform={`translate(${fx(b.vx)} ${b.vy}) rotate(-90)`} textLength="91" lengthAdjust="spacingAndGlyphs">{b.v}</ValueText>
          {b.lines.map(([t, x, len]) => (
            <CategoryText key={t} transform={`translate(${fx(x)} 1577) rotate(-90)`} textLength={len} lengthAdjust="spacingAndGlyphs">{t}</CategoryText>
          ))}
        </g>
      ))}
      <AxisTitle transform="translate(1050 1260) rotate(-90)" textLength="127" lengthAdjust="spacingAndGlyphs">Trip Counts</AxisTitle>
      <rect x="1030" y="1228" width="4" height="20" fill="#666" />
      <rect x="1038" y="1236" width="4" height="12" fill="#666" />
      <rect x="1046" y="1242" width="4" height="6" fill="#666" />
    </ChartSvg>
  );
}

export default function App() {
  return (
    <>
      <Global />
      <Frame>
        <Title>Top 10 Start Stations</Title>
        <DashRule />
        <TopRow>
          <Cloud viewBox="18 118 1595 966" xmlns="http://www.w3.org/2000/svg">
            {WORDS.map(([t, l, r, y, s, c]) => (
              <CloudWord key={t} x={l} y={y} $size={s} $color={c} textLength={r - l} lengthAdjust="spacingAndGlyphs">{t}</CloudWord>
            ))}
          </Cloud>
          <Legend>
            <LegendTitle>Start Station Name</LegendTitle>
            {LEGEND.map(([t, c, a]) => (
              <LegendRow key={t}>
                <Swatch $color={c} />
                <LegendLabel $active={a}>{t}</LegendLabel>
              </LegendRow>
            ))}
          </Legend>
        </TopRow>
        <BottomRow>
          <MapBox>
            <MapDrawing />
            <Attribution>© 2021 Mapbox © OpenStreetMap</Attribution>
          </MapBox>
          <Chart />
        </BottomRow>
      </Frame>
    </>
  );
}
